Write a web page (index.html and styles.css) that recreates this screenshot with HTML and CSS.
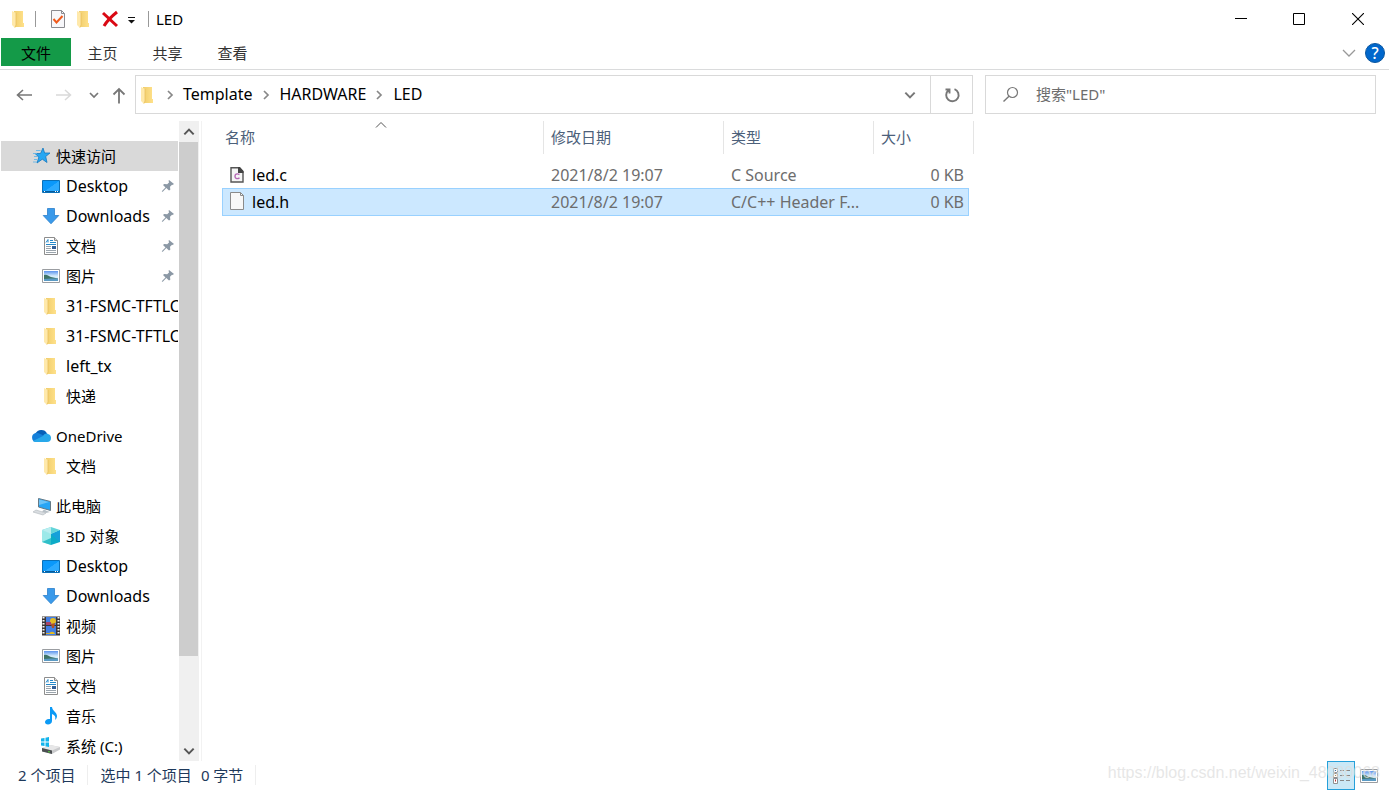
FILE: index.html
```html
<!DOCTYPE html>
<html lang="zh-CN">
<head>
<meta charset="utf-8">
<title>LED</title>
<link rel="stylesheet" href="styles.css">
</head>
<body>
<svg class="defs" aria-hidden="true">
  <defs>
    <linearGradient id="gold" x1="0" x2="1"><stop offset="0" stop-color="#f0cd6c"/><stop offset="1" stop-color="#ffe18a"/></linearGradient>
    <linearGradient id="sky" x1="0" y1="0" x2="0" y2="1"><stop offset="0" stop-color="#5b93ee"/><stop offset=".5" stop-color="#d5ecfb"/><stop offset="1" stop-color="#d5ecfb"/></linearGradient>
    <linearGradient id="screen" x1="0" y1="0" x2="1" y2="1"><stop offset=".5" stop-color="#0a98fb"/><stop offset=".52" stop-color="#2caaff"/></linearGradient>
    <symbol id="folder" viewBox="0 0 20 20">
      <path d="M5 2h9v12h1v4H5z" fill="url(#gold)"/><path d="M3 2l4 2v12l-1 3-3-3z" fill="#ffe9ab"/><path d="M7 4v12l-1 2.500" fill="none" stroke="#e6bd56" stroke-width=".7"/>
    </symbol>
    <symbol id="desktop" viewBox="0 0 20 20">
      <path d="M1.500 4.500h17v12h-17z" fill="url(#screen)" stroke="#0b70b8"/><path d="M2 15.500h16" stroke="#075b9a"/><path d="M3 15.500h1M14 15.500h1M16 15.500h1" stroke="#fff"/>
    </symbol>
    <symbol id="download" viewBox="0 0 20 20">
      <path d="M6.500 2.500h7v7h4.300L10 17.800 2.200 9.500h4.300z" fill="#3a9aea" stroke="#2a7fcb" stroke-width=".8"/>
    </symbol>
    <symbol id="document" viewBox="0 0 20 20">
      <path d="M3.500 1.500h10l3 3v14h-13z" fill="#fff" stroke="#8d8d8d"/><path d="M13.500 1.500v3h3" fill="#ddd" stroke="#8d8d8d"/><path d="m5 6.500 2-3v3M9 4.500h3M9 6.500h6M5 8.500h10" stroke="#2589ca" fill="none"/><path d="M5 10.500h5M5 12.500h5M5 14.500h10M5 16.500h10" stroke="#9ba5ad"/><path d="M11 10h4v3h-4z" fill="#325f98"/>
    </symbol>
    <symbol id="picture" viewBox="0 0 20 20">
      <path d="M1.500 3.500h17v13h-17z" fill="#fff" stroke="#9a9da1"/><path d="M3 5h14v10H3z" fill="url(#sky)"/><path d="M3 9c3-1 4 1 7 2l7 1.500V14H3z" fill="#3f7467"/><path d="M3 13c5-1 9-.5 14-.500V15H3z" fill="#5a9ac4"/>
    </symbol>
    <symbol id="pin" viewBox="0 0 14 14">
      <path d="m8 1 5 4-1.500 1-.5-.3-2 2 .3 3L8 11.500 5.300 9 2 12.500.8 13l.4-1.200L4.500 8.500 2 6l1.200-1 3 .2 2-2L7.500 2z" fill="#8b98a5"/>
    </symbol>
    <symbol id="star" viewBox="0 0 20 20">
      <path d="m12 2 1.600 5H19l-4.300 3.500L16 16.500l-4.700-3.300L6 17l1.900-6L4 7.500h5.500z" fill="#27a7f2" stroke="#1679bf" stroke-width=".8"/><path d="M5 4.500h4.500M2 7.500h4M3 10.500h4M3 13.500h3M2 16h4" stroke="#64b5e8" stroke-width=".9"/>
    </symbol>
    <symbol id="cloud" viewBox="0 0 20 20">
      <path d="M4.500 8A6.300 6.300 0 0 1 16 7.500L12 13z" fill="#0760b8"/><path d="M5 16a4.600 4.600 0 0 1-.5-9c2-.4 4 .2 6 1.500l3.500 2L7 16z" fill="#1480da"/><path d="m2 15 10-5c1.500-2.500 4-3 5.500-1.800 1.800.5 2.500 2 2.500 3.800a4 4 0 0 1-4 4H5c-1.300 0-2.200-.3-3-1z" fill="#28a8ea"/>
    </symbol>
    <symbol id="computer" viewBox="0 0 20 20">
      <path d="m7.500 2.500 12 3v9l-12-3.500z" fill="#28a5f5" stroke="#657985"/><path d="m8 3.500 10 2.500L8 9z" fill="#6cc3f8"/><path d="m13 13.500-2 2 4 1.500 4-1-3-1z" fill="#b7c0c7"/><path d="m5 14 10 3-3 2-10-3z" fill="#d9dde1" stroke="#aeb5ba" stroke-width=".6"/>
    </symbol>
    <symbol id="cube" viewBox="0 0 20 20">
      <path d="m1 4 9 4v11l-9-3z" fill="#9ce9e9"/><path d="m19 4-9 4v11l9-3z" fill="#0cabc7"/><path d="m1 16 9-4v7z" fill="#31bfc8"/><path d="m10 8 9-4v12z" fill="#16a0da"/><path d="m10 1 9 3-9 4-9-4z" fill="#64d5d9"/><path d="M10 1v7L1 4z" fill="#b9eef0"/>
    </symbol>
    <symbol id="film" viewBox="0 0 20 20">
      <path d="M1 .5h18v19H1z" fill="#3b3737"/><path d="M2.500 1v18M17.500 1v18" stroke="#f5f5f5" stroke-width="2" stroke-dasharray="1.500 1.500"/><path d="M5 1h10v8H5zM5 10h10v9H5z" fill="#427fe3"/><circle cx="12" cy="5" r="3" fill="#e6bc22"/><path d="M5 6h5v3H5z" fill="#a8446b"/><path d="m10 8 4-1-1 5h-2z" fill="#b4521f"/><path d="M8 18c1-3 5-3 6 0z" fill="#e6bc22"/><path d="M5 17h3v1H5z" fill="#d8a92e"/>
    </symbol>
    <symbol id="music" viewBox="0 0 20 20">
      <path d="M9 1h2c.2 4 5 5 5 9 0 2-1 3-2 4 1-3 0-5-3-6v7c0 2-2 3.500-4 3.500S4 17.500 4 16c0-2 2-3.500 5-3z" fill="#0c9af5"/>
    </symbol>
    <symbol id="drive" viewBox="0 0 20 20">
      <path d="m1 12 8-3 10 2v2.500L11 18l-10-3z" fill="#c9cacc"/><path d="m1 12 8-3 10 2-8 3.500z" fill="#e7e7e8"/><path d="m1 12 10 2.500V18L1 15.500z" fill="#4c5052"/><path d="M7 15.800h2" stroke="#54d63b"/><path d="M0 2.500 3.500 2v3.500H0zM4.500 1.800 8 1v4.500H4.500zM0 6.500h3.500V10L0 9.500zM4.500 6.500H8v4.400l-3.500-.6z" fill="#12b4ec"/>
    </symbol>
    <symbol id="chevron-down" viewBox="0 0 12 12"><path d="m2 4 4 4 4-4" fill="none" stroke="currentColor" stroke-width="1.700"/></symbol>
    <symbol id="chevron-up" viewBox="0 0 12 12"><path d="m2 8 4-4 4 4" fill="none" stroke="currentColor" stroke-width="1.700"/></symbol>
    <symbol id="chevron-right" viewBox="0 0 12 12"><path d="m4 2 4 4-4 4" fill="none" stroke="currentColor" stroke-width="1.700"/></symbol>
  </defs>
</svg>

<header class="titlebar">
  <div class="quick-tools">
    <svg class="icon"><use href="#folder"/></svg>
    <span class="divider"></span>
    <button class="tool" aria-label="属性"><svg class="icon" viewBox="0 0 20 20"><path d="M3.500 1.500h10l3 3v14h-13z" fill="#f7f7fa" stroke="#8b8b90"/><path d="M13.500 1.500v3h3" fill="none" stroke="#8b8b90"/><path d="m5.500 10 3 3.500L14.500 7" fill="none" stroke="#ef5a1c" stroke-width="2"/></svg></button>
    <button class="tool" aria-label="新建文件夹"><svg class="icon"><use href="#folder"/></svg></button>
    <button class="tool" aria-label="删除"><svg class="icon" viewBox="0 0 20 20"><path d="m3 4 14 13M17 3C12 7 7 12 4 17" fill="none" stroke="#da0914" stroke-width="3"/></svg></button>
    <button class="tool menu-tool" aria-label="自定义快速访问工具栏"><svg class="small-icon" viewBox="0 0 12 12"><path d="M2 4.500h7" stroke="#111"/><path d="M2 7h7l-3.500 3.500z" fill="#111"/></svg></button>
    <span class="divider"></span>
  </div>
  <h1 class="title">LED</h1>
  <div class="window-controls">
    <button class="window-button" aria-label="最小化"><svg class="small-icon" viewBox="0 0 12 12"><path d="M0 5.500h12" stroke="#000"/></svg></button>
    <button class="window-button" aria-label="最大化"><svg class="small-icon" viewBox="0 0 12 12"><path d="M.5.5h11v11H.5z" fill="none" stroke="#000"/></svg></button>
    <button class="window-button close" aria-label="关闭"><svg class="small-icon" viewBox="0 0 12 12"><path d="m0 0 12 12M12 0 0 12" stroke="#000" stroke-width="1.100"/></svg></button>
  </div>
</header>

<nav class="ribbon" aria-label="功能区">
  <button class="tab file-tab">文件</button>
  <button class="tab">主页</button>
  <button class="tab">共享</button>
  <button class="tab">查看</button>
  <div class="ribbon-tools">
    <button class="tool expand" aria-label="展开功能区"><svg class="expand-icon" viewBox="0 0 14 14"><path d="m1 4 6 6 6-6" fill="none" stroke="currentColor" stroke-width="1.300"/></svg></button>
    <button class="help" aria-label="帮助">?</button>
  </div>
</nav>

<div class="navigation">
  <div class="history">
    <button class="tool" aria-label="后退"><svg class="icon" viewBox="0 0 20 20"><path d="M17 10H2.500M8 5l-5.500 5L8 15" fill="none" stroke="#777" stroke-width="1.600"/></svg></button>
    <button class="tool forward" aria-label="前进"><svg class="icon" viewBox="0 0 20 20"><path d="M3 10h15m-6-5 5.500 5-5.500 5" fill="none" stroke="#d9d9d9" stroke-width="1.500"/></svg></button>
    <button class="tool recent" aria-label="最近位置"><svg class="small-icon"><use href="#chevron-down"/></svg></button>
    <button class="tool up" aria-label="向上"><svg class="icon" viewBox="0 0 20 20"><path d="M10 18.500V4M4.500 9.500 10 4l5.500 5.500" fill="none" stroke="#777" stroke-width="1.800"/></svg></button>
  </div>
  <div class="address">
    <svg class="icon"><use href="#folder"/></svg>
    <svg class="crumb-arrow first"><use href="#chevron-right"/></svg>
    <a class="crumb" href="#template">Template</a>
    <svg class="crumb-arrow"><use href="#chevron-right"/></svg>
    <a class="crumb" href="#hardware">HARDWARE</a>
    <svg class="crumb-arrow"><use href="#chevron-right"/></svg>
    <a class="crumb" href="#led">LED</a>
    <button class="tool address-menu" aria-label="以前的位置"><svg class="menu-icon"><use href="#chevron-down"/></svg></button>
    <button class="tool refresh" aria-label="刷新"><svg class="icon" viewBox="0 0 20 20"><path d="M12.500 4.200A6.200 6.200 0 1 1 6.500 5.200M3.500 4.500h4v4" fill="none" stroke="#777" stroke-width="1.900"/></svg></button>
  </div>
  <label class="search">
    <svg class="icon" viewBox="0 0 20 20"><circle cx="10.500" cy="7.500" r="5" fill="none" stroke="#777" stroke-width="1.200"/><path d="m7 11.200-5.500 5.300" stroke="#777" stroke-width="1.400"/></svg>
    <input class="search-input" type="text" placeholder="搜索&quot;LED&quot;" aria-label="搜索LED">
  </label>
</div>

<div class="workspace">
  <aside class="sidebar">
    <nav class="tree" aria-label="导航窗格">
      <section class="group">
        <a class="node root selected" href="#quick"><svg class="icon"><use href="#star"/></svg><span class="label">快速访问</span></a>
        <a class="node" href="#desktop-q"><svg class="icon"><use href="#desktop"/></svg><span class="label latin">Desktop</span><svg class="pin"><use href="#pin"/></svg></a>
        <a class="node" href="#downloads-q"><svg class="icon"><use href="#download"/></svg><span class="label latin">Downloads</span><svg class="pin"><use href="#pin"/></svg></a>
        <a class="node" href="#documents-q"><svg class="icon"><use href="#document"/></svg><span class="label">文档</span><svg class="pin"><use href="#pin"/></svg></a>
        <a class="node" href="#pictures-q"><svg class="icon"><use href="#picture"/></svg><span class="label">图片</span><svg class="pin"><use href="#pin"/></svg></a>
        <a class="node" href="#fsmc-a"><svg class="icon"><use href="#folder"/></svg><span class="label latin">31-FSMC-TFTLC</span></a>
        <a class="node" href="#fsmc-b"><svg class="icon"><use href="#folder"/></svg><span class="label latin">31-FSMC-TFTLC</span></a>
        <a class="node" href="#left"><svg class="icon"><use href="#folder"/></svg><span class="label latin">left_tx</span></a>
        <a class="node" href="#express"><svg class="icon"><use href="#folder"/></svg><span class="label">快递</span></a>
      </section>
      <section class="group">
        <a class="node root" href="#onedrive"><svg class="icon"><use href="#cloud"/></svg><span class="label">OneDrive</span></a>
        <a class="node" href="#onedrive-docs"><svg class="icon"><use href="#folder"/></svg><span class="label">文档</span></a>
      </section>
      <section class="group">
        <a class="node root" href="#pc"><svg class="icon"><use href="#computer"/></svg><span class="label">此电脑</span></a>
        <a class="node" href="#objects"><svg class="icon"><use href="#cube"/></svg><span class="label">3D 对象</span></a>
        <a class="node" href="#desktop-p"><svg class="icon"><use href="#desktop"/></svg><span class="label latin">Desktop</span></a>
        <a class="node" href="#downloads-p"><svg class="icon"><use href="#download"/></svg><span class="label latin">Downloads</span></a>
        <a class="node" href="#videos"><svg class="icon"><use href="#film"/></svg><span class="label">视频</span></a>
        <a class="node" href="#pictures-p"><svg class="icon"><use href="#picture"/></svg><span class="label">图片</span></a>
        <a class="node" href="#documents-p"><svg class="icon"><use href="#document"/></svg><span class="label">文档</span></a>
        <a class="node" href="#music-p"><svg class="icon"><use href="#music"/></svg><span class="label">音乐</span></a>
        <a class="node" href="#system"><svg class="icon"><use href="#drive"/></svg><span class="label">系统 (C:)</span></a>
      </section>
    </nav>
    <div class="scrollbar">
      <button class="scroll-button" aria-label="向上滚动"><svg class="menu-icon"><use href="#chevron-up"/></svg></button>
      <div class="track"><div class="thumb"></div></div>
      <button class="scroll-button" aria-label="向下滚动"><svg class="menu-icon"><use href="#chevron-down"/></svg></button>
    </div>
  </aside>
  <main class="content">
    <table class="files">
      <colgroup><col class="col-name"><col class="col-date"><col class="col-type"><col class="col-size"><col class="col-edge"></colgroup>
      <thead><tr>
        <th class="heading sorted" aria-sort="ascending">名称<svg class="sort-mark" viewBox="0 0 12 6"><path d="m1 5.500 5-5 5 5" fill="none" stroke="#555"/></svg></th>
        <th class="heading">修改日期</th><th class="heading">类型</th><th class="heading" colspan="2">大小</th>
      </tr></thead>
      <tbody>
        <tr class="file"><td class="cell name"><span class="file-name"><svg class="icon" viewBox="0 0 20 20"><path d="M4 2.800h8l4 4V17H4z" fill="#f5f5f5" stroke="#555" stroke-width="1.400"/><path d="M11 2h2l3.500 4v2H11z" fill="#444"/><path d="M12.500 9.500c-3-1.500-4.500 0-4.500 1.800 0 2 1.500 3 4.500 1.700" fill="none" stroke="#b565b4" stroke-width="1.400"/></svg>led.c</span></td><td class="cell">2021/8/2 19:07</td><td class="cell">C Source</td><td class="cell size">0 KB</td></tr>
        <tr class="file chosen"><td class="cell name"><span class="file-name"><svg class="icon" viewBox="0 0 20 20"><path d="M3.500.5h10l3 3v14h-13z" fill="#f8f8f8" stroke="#8b8b8b"/><path d="M13.500.5v3h3" fill="none" stroke="#8b8b8b"/></svg>led.h</span></td><td class="cell">2021/8/2 19:07</td><td class="cell">C/C++ Header F...</td><td class="cell size">0 KB</td></tr>
      </tbody>
    </table>
  </main>
</div>

<footer class="status">
  <span class="count">2 个项目</span>
  <span class="selection"><span>选中 1 个项目</span><span>0 字节</span></span>
  <div class="views">
    <button class="view active" aria-label="详细信息"><svg class="icon" viewBox="0 0 20 20"><path d="M2.500 2.500h4v4h-4zM2.500 7.500h4v4h-4zM2.500 12.500h4v5h-4z" fill="#fff" stroke="#909090"/><path d="M4 4.500h1" stroke="#2b6ba3"/><path d="M4 9.500h1" stroke="#b48b46"/><path d="M4 14.500h1" stroke="#b33" stroke-width="2"/><path d="M9 4.500h4M15 4.500h4M9 9.500h4M15 9.500h4M9 14.500h4M15 14.500h4" stroke="#888"/></svg></button>
    <button class="view" aria-label="大图标"><svg class="icon"><use href="#picture"/></svg></button>
  </div>
</footer>
<div class="watermark">https://blog.csdn.net/weixin_48080068</div>
</body>
</html>
```
FILE: styles.css
```css
* { box-sizing: border-box; }
body {
  display: flex;
  flex-direction: column;
  height: 100vh;
  margin: 0;
  overflow: hidden;
  background: #fff;
  color: #000;
  font: 15px/20px "Noto Sans", "Noto Sans CJK SC", sans-serif;
}
button, input { font: inherit; color: inherit; }
button { padding: 0; border: 0; background: none; }
a { color: inherit; text-decoration: none; }
svg { display: block; flex: none; }
.defs { position: absolute; width: 0; height: 0; }
.icon { width: 20px; height: 20px; }
.small-icon { width: 12px; height: 12px; }
.menu-icon { width: 14px; height: 14px; }
.tool { display: flex; align-items: center; justify-content: center; color: #777; }
.latin { font-size: 16px; }

.titlebar { display: flex; flex: none; align-items: center; height: 38px; padding-left: 9px; }
.quick-tools { display: flex; align-items: center; gap: 6px; }
.divider { width: 1px; height: 16px; background: #999; }
.quick-tools .divider:first-of-type { margin-right: 6px; }
.menu-tool { margin-right: 4px; }
.title { margin: 0 0 0 7px; font-size: 15px; font-weight: 400; }
.window-controls { display: flex; height: 100%; margin-left: auto; padding-right: 1px; }
.window-button { display: flex; align-items: center; justify-content: center; width: 58px; }
.close { width: 60px; }

.ribbon { display: flex; flex: none; height: 32px; padding: 0 4px 3px 1px; border-bottom: 1px solid #dadbdc; }
.tab { width: 65px; padding: 2px 2px 0 0; color: #333; }
.file-tab { width: 70px; padding-right: 0; background: #149a48; color: #000; }
.ribbon-tools { display: flex; align-items: center; gap: 9px; margin-left: auto; padding-top: 2px; }
.expand { color: #999; }
.expand-icon { width: 14px; height: 14px; }
.help { width: 20px; height: 20px; border: 1px solid #0b57a0; border-radius: 50%; background: #0067cc; color: #fff; font-size: 16px; font-weight: 500; line-height: 18px; }

.navigation { display: flex; flex: none; align-items: center; height: 51px; padding: 0 13px 2px 15px; }
.history { display: flex; align-items: center; width: 120px; }
.forward { margin-left: 18px; }
.recent { margin-left: 15px; }
.up { margin-left: 9px; }
.address { display: flex; flex: 1; align-items: center; height: 39px; min-width: 0; padding-left: 2px; border: 1px solid #d9d9d9; }
.crumb { padding-bottom: 2px; font-size: 16px; }
.crumb-arrow { width: 12px; height: 12px; margin: 0 8px 0 7px; color: #888; }
.crumb-arrow.first { margin: 0 7px 0 6px; }
.address-menu { width: 40px; height: 37px; margin-left: auto; }
.refresh { width: 42px; height: 37px; border-left: 1px solid #d9d9d9; }
.search { display: flex; align-items: center; width: 391px; height: 39px; margin-left: 12px; padding-left: 16px; border: 1px solid #d9d9d9; }
.search-input { flex: 1; min-width: 0; margin-left: 14px; padding: 0 0 2px; border: 0; outline: 0; }
.search-input::placeholder { color: #6d6d6d; opacity: 1; }

.workspace { display: flex; flex: 1; min-height: 0; }
.sidebar { display: flex; flex: none; width: 202px; border-right: 1px solid #f2f2f2; }
.tree { flex: 1; min-width: 0; padding: 20px 1px 0; overflow: hidden; }
.group { margin-bottom: 10px; }
.node { display: flex; align-items: center; height: 30px; padding-left: 40px; overflow: hidden; }
.root { padding-left: 30px; }
.selected { background: #d9d9d9; }
.label { margin-left: 5px; white-space: nowrap; }
.pin { width: 14px; height: 14px; margin: 0 3px 0 auto; }
.scrollbar { display: flex; flex: none; flex-direction: column; width: 20px; margin: 0 2px 0 0; background: #f0f0f0; }
.scroll-button { display: flex; align-items: center; justify-content: center; height: 21px; padding-right: 1px; color: #555; }
.track { flex: 1; }
.thumb { width: 19px; height: 86%; background: #cdcdcd; }
.content { flex: 1; min-width: 0; padding-left: 20px; }
.files { width: 752px; table-layout: fixed; border-spacing: 0; }
.col-name { width: 322px; }
.col-date { width: 180px; }
.col-type { width: 150px; }
.col-size { width: 95px; }
.col-edge { width: 5px; }
.heading { position: relative; height: 33px; padding: 0 7px 2px; border-right: 1px solid #e5e5e5; color: #4c607a; font-weight: 400; text-align: left; }
.heading:first-child { padding-left: 3px; }
.sort-mark { position: absolute; top: 1px; left: 50%; width: 12px; height: 6px; margin-left: -8px; }
.files tbody::before { display: block; height: 7px; content: ""; }
.cell { height: 27px; padding: 0 7px; overflow: hidden; color: #6d6d6d; font-size: 16px; text-overflow: ellipsis; white-space: nowrap; }
.name { padding-left: 5px; color: #000; }
.file-name { display: flex; align-items: center; gap: 5px; }
.size { padding-right: 5px; text-align: right; }
.chosen .cell { height: 28px; border: solid #99d1ff; border-width: 1px 0; background: #cce8ff; }
.chosen .name { padding-left: 4px; border-left-width: 1px; }
.chosen .size { padding-right: 4px; border-right-width: 1px; }

.status { display: flex; flex: none; align-items: center; height: 30px; padding-left: 18px; color: #1e395b; }
.count, .selection { margin-bottom: 2px; border-right: 1px solid #eee; }
.count { padding-right: 12px; }
.selection { display: flex; gap: 9px; padding: 0 12px; }
.views { display: flex; height: 100%; margin-left: auto; padding-right: 6px; }
.view { display: flex; align-items: center; justify-content: center; width: 28px; height: 29px; }
.active { border: 1px solid #26a0da; background: #cbe8f6; }
.watermark { position: absolute; right: 9px; bottom: 8px; color: rgb(222 222 222 / 75%); font: 16px/20px "Liberation Sans", sans-serif; pointer-events: none; }
```
